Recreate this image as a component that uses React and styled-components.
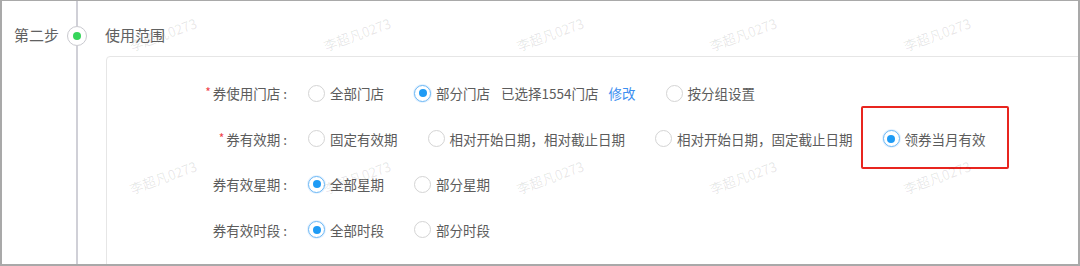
import React from "react";
import styled, { createGlobalStyle } from "styled-components";

const GlobalStyle = createGlobalStyle`
  html, body { margin: 0; padding: 0; background: #fff; }
  body { font-family: "Noto Sans CJK SC", "Noto Sans", sans-serif; }
  * { box-sizing: border-box; }
`;

const Frame = styled.div`
  position: relative;
  width: 1080px;
  height: 266px;
  display: flex;
  background: #fff;
  border: 2px solid #a9a9a9;
  border-top-width: 1px;
  overflow: hidden;
  color: #5c5c5c;
`;

const StepName = styled.div`
  margin-left: 12px;
  padding-top: 24px;
  font-size: 15px;
  line-height: 20px;
  color: #616161;
  white-space: nowrap;
`;

const Rail = styled.div`
  margin-left: 8px;
  width: 20px;
  display: flex;
  flex-direction: column;
  align-items: center;
  flex-shrink: 0;
`;

const RailLine = styled.div`
  width: 2px;
  background: #d0d0d7;
  height: ${(p) => (p.$grow ? "auto" : "25px")};
  flex: ${(p) => (p.$grow ? 1 : "none")};
`;

const RailDot = styled.div`
  width: 20px;
  height: 20px;
  border-radius: 50%;
  border: 1px solid #c9c9cf;
  background: #fff;
  display: flex;
  align-items: center;
  justify-content: center;
  &::after {
    content: "";
    width: 8px;
    height: 8px;
    border-radius: 50%;
    background: #36d55a;
  }
`;

const StepBody = styled.div`
  flex: 1;
  margin-left: 19px;
  margin-right: -30px;
  padding-top: 24px;
  display: flex;
  flex-direction: column;
`;

const StepTitle = styled.div`
  font-size: 15px;
  line-height: 20px;
  color: #616161;
  margin-left: -1px;
  margin-bottom: 11px;
`;

const Card = styled.div`
  flex: 1;
  border: 1px solid #e6e6e6;
  border-radius: 4px;
  padding-top: 20px;
  display: flex;
  flex-direction: column;
  gap: 13.5px;
  min-height: 300px;
`;

const Row = styled.div`
  display: flex;
  align-items: center;
  height: 32px;
  font-size: 13.5px;
`;

const Label = styled.div`
  width: 183px;
  flex-shrink: 0;
  text-align: right;
  color: #5c5c5c;
  white-space: nowrap;
`;

const Star = styled.span`
  color: #f0434a;
  font-size: 12px;
  margin-right: 2px;
  position: relative;
  top: -2px;
`;

const Colon = styled.span`
  margin-left: 3px;
  margin-right: 3px;
`;

const Options = styled.div`
  display: flex;
  align-items: center;
  gap: 30px;
  margin-left: 18px;
  white-space: nowrap;
`;

const Option = styled.label`
  position: relative;
  display: flex;
  align-items: center;
  gap: 5px;
  color: #5c5c5c;
  ${(p) =>
    p.$highlight &&
    `
    &::after {
      content: "";
      position: absolute;
      left: -22px;
      right: -23px;
      top: -23px;
      bottom: -20px;
      border: 2px solid #e8251f;
      border-radius: 2px;
      pointer-events: none;
    }
  `}
`;

const Radio = styled.span`
  width: 17px;
  height: 17px;
  border-radius: 50%;
  flex-shrink: 0;
  background: #fff;
  border: 1px solid ${(p) => (p.$checked ? "#6cb8f5" : "#d4d4d4")};
  box-shadow: ${(p) => (p.$checked ? "0 0 0 1px rgba(64,158,255,0.15)" : "none")};
  display: flex;
  align-items: center;
  justify-content: center;
  &::after {
    content: "";
    width: 8px;
    height: 8px;
    border-radius: 50%;
    background: #1e9bf5;
    display: ${(p) => (p.$checked ? "block" : "none")};
  }
`;

const Note = styled.span`
  margin-left: 6px;
  color: #5c5c5c;
`;

const Link = styled.a`
  margin-left: 5px;
  color: #3d8ff0;
  text-decoration: none;
  cursor: pointer;
`;

const Mark = styled.span`
  position: absolute;
  transform: translate(-50%, -50%) rotate(-20deg);
  font-size: 13.5px;
  color: rgba(0, 0, 0, 0.1);
  white-space: nowrap;
  pointer-events: none;
  user-select: none;
`;

const marks = [];
[33, 176].forEach((y) => {
  [161, 354.5, 548, 741, 935].forEach((x) => marks.push({ x, y }));
});

function Field({ required, label, children }) {
  return (
    <Row>
      <Label>
        {required && <Star>*</Star>}
        {label}
        <Colon>:</Colon>
      </Label>
      <Options>{children}</Options>
    </Row>
  );
}

function Choice({ checked, highlight, children, extra }) {
  return (
    <Option $highlight={highlight}>
      <Radio $checked={checked} />
      <span>{children}</span>
      {extra}
    </Option>
  );
}

export default function App() {
  return (
    <>
      <GlobalStyle />
      <Frame>
        <StepName>第二步</StepName>
        <Rail>
          <RailLine />
          <RailDot />
          <RailLine $grow />
        </Rail>
        <StepBody>
          <StepTitle>使用范围</StepTitle>
          <Card>
            <Field required label="券使用门店">
              <Choice>全部门店</Choice>
              <Choice
                checked
                extra={
                  <>
                    <Note>已选择1554门店</Note>
                    <Link>修改</Link>
                  </>
                }
              >
                部分门店
              </Choice>
              <Choice>按分组设置</Choice>
            </Field>
            <Field required label="券有效期">
              <Choice>固定有效期</Choice>
              <Choice>相对开始日期，相对截止日期</Choice>
              <Choice>相对开始日期，固定截止日期</Choice>
              <Choice checked highlight>领券当月有效</Choice>
            </Field>
            <Field label="券有效星期">
              <Choice checked>全部星期</Choice>
              <Choice>部分星期</Choice>
            </Field>
            <Field label="券有效时段">
              <Choice checked>全部时段</Choice>
              <Choice>部分时段</Choice>
            </Field>
          </Card>
        </StepBody>
        {marks.map((m, i) => (
          <Mark key={i} style={{ left: m.x, top: m.y }}>
            李超凡0273
          </Mark>
        ))}
      </Frame>
    </>
  );
}
